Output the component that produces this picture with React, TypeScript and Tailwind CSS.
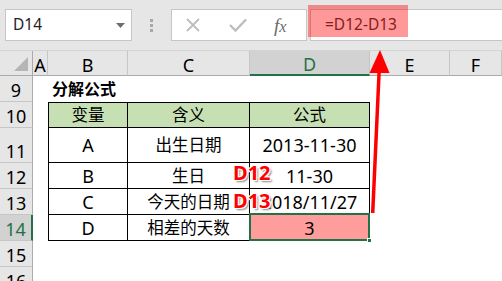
import React from "react";

const SANS = "font-['Noto_Sans','Noto_Sans_CJK_SC',sans-serif]";

const colHeads = [
  { name: "A", active: false },
  { name: "B", active: false },
  { name: "C", active: false },
  { name: "D", active: true },
  { name: "E", active: false },
  { name: "F", active: false },
];

const tableRows = [
  { n: 10, cells: ["变量", "含义", "公式"], head: true },
  { n: 11, cells: ["A", "出生日期", "2013-11-30"] },
  { n: 12, cells: ["B", "生日", "11-30"] },
  { n: 13, cells: ["C", "今天的日期", "2018/11/27"] },
  { n: 14, cells: ["D", "相差的天数", "3"] },
];

const isCjk = (s: string) => /[\u4e00-\u9fff]/.test(s);

const RowHead = ({ n, active }: { n: number; active?: boolean }) => (
  <div
    className={
      active
        ? "flex items-end justify-center pb-[2px] bg-[#d2d2d2] border-r-2 border-r-[#217346] border-b border-b-[#c6c6c6] text-[#217346] text-[18px] leading-[18px]"
        : "flex items-end justify-center pb-[2px] bg-[#e6e6e6] border-r border-r-[#ababab] border-b border-b-[#c6c6c6] text-black text-[18px] leading-[18px]"
    }
  >
    {n}
  </div>
);

const Toolbar = () => (
  <div className="h-[51px] bg-[#e6e6e6] border-b border-[#d4d4d4] flex items-start pt-[9px] pl-[5px]">
    {/* name box */}
    <div className="w-[127px] h-[32px] bg-white border border-[#c6c6c6] flex items-center justify-between pl-[7px] pr-[6px]">
      <span className="text-[15.5px] text-[#222]">D14</span>
      <svg width="9" height="5" viewBox="0 0 9 5">
        <polygon points="0,0 9,0 4.5,5" fill="#6e6e6e" />
      </svg>
    </div>
    {/* drag dots */}
    <div className="w-[39px] h-[32px] flex flex-col items-center justify-center gap-[2px]">
      <div className="w-[3px] h-[3px] bg-[#a8a8a8]" />
      <div className="w-[3px] h-[3px] bg-[#a8a8a8]" />
      <div className="w-[3px] h-[3px] bg-[#a8a8a8]" />
    </div>
    {/* cancel / enter / fx */}
    <div className="w-[136px] h-[32px] bg-white border border-[#c6c6c6] flex items-center pl-[14px]">
      <svg width="14" height="14" viewBox="0 0 14 14">
        <path d="M1 1 L13 13 M13 1 L1 13" stroke="#bdbdbd" strokeWidth="1.8" fill="none" />
      </svg>
      <svg width="18" height="14" viewBox="0 0 18 14" className="ml-[29px]">
        <path d="M1 7 L6.5 12.5 L17 1.5" stroke="#bdbdbd" strokeWidth="2.4" fill="none" />
      </svg>
      <span className="ml-[27px] font-['Liberation_Serif',serif] italic text-[19px] text-[#6a6a6a] leading-none">
        f<span className="text-[16px]">x</span>
      </span>
    </div>
    {/* formula bar */}
    <div className="flex-1 ml-[3px] h-[32px] bg-white border-y border-l border-[#c6c6c6] flex items-center pl-[14px]">
      <span className="text-[15.5px] text-[#333]">=D12-D13</span>
    </div>
  </div>
);

export default function App() {
  return (
    <div className={`relative w-[502px] h-[281px] overflow-hidden bg-white ${SANS}`}>
      <Toolbar />

      <div className="grid grid-cols-[33px_15px_80px_122px_120px_80px_1fr] grid-rows-[25px_26px_26px_35px_26px_26px_26px_26px_26px]">
        {/* column headers */}
        <div className="flex items-end justify-end pr-[4px] pb-[4px] bg-[#e6e6e6] border-r border-r-[#ababab] border-b border-b-[#ababab]">
          <svg width="14" height="14" viewBox="0 0 14 14">
            <polygon points="14,0 14,14 0,14" fill="#b5b5b5" />
          </svg>
        </div>
        {colHeads.map((c) => (
          <div
            key={c.name}
            className={
              c.active
                ? "flex items-center justify-center bg-[#d2d2d2] border-r border-r-[#c6c6c6] border-b-2 border-b-[#217346] text-[#217346] text-[18px] leading-[18px] pt-[3px]"
                : "flex items-center justify-center bg-[#e6e6e6] border-r border-r-[#c6c6c6] border-b border-b-[#ababab] text-black text-[18px] leading-[18px] pt-[3px]"
            }
          >
            {c.name}
          </div>
        ))}

        {/* row 9 */}
        <RowHead n={9} />
        <div />
        <div className="flex items-center pl-[4px] whitespace-nowrap font-bold text-[16px] leading-[18px] text-black">
          分解公式
        </div>
        <div />
        <div />
        <div />
        <div />

        {/* table rows */}
        {tableRows.map((r) => (
          <React.Fragment key={r.n}>
            <RowHead n={r.n} active={r.n === 14} />
            <div />
            {r.cells.map((t, i) => {
              const selected = r.n === 14 && i === 2;
              const border = [
                "border-r border-b border-black",
                i === 0 ? "border-l" : "",
                r.head ? "border-t" : "",
              ].join(" ");
              const bg = r.head ? "bg-[#c6e0b4]" : selected ? "bg-[#ff9c9c]" : "bg-white";
              const size = isCjk(t) ? "text-[16.5px]" : "text-[18px]";
              return (
                <div
                  key={i}
                  className={`relative flex items-center justify-center whitespace-nowrap leading-[18px] text-black ${border} ${bg} ${size}`}
                >
                  {t}
                  {selected && (
                    <div className="absolute -left-[1px] -top-[2px] -right-[1px] -bottom-[1px] border-2 border-[#217346]">
                      <div className="absolute -right-[4px] -bottom-[4px] w-[5px] h-[5px] bg-[#217346] border border-white" />
                    </div>
                  )}
                </div>
              );
            })}
            <div />
            <div />
          </React.Fragment>
        ))}

        {/* rows 15, 16 */}
        {[15, 16].map((n) => (
          <React.Fragment key={n}>
            <RowHead n={n} />
            <div />
            <div />
            <div />
            <div />
            <div />
            <div />
          </React.Fragment>
        ))}
      </div>

      {/* formula highlight */}
      <div className="absolute left-[308px] top-[5px] w-[100px] h-[32px] bg-[rgba(255,0,0,0.4)]" />

      {/* cell reference labels */}
      <div className="absolute left-[233px] top-[163px] text-[20px] leading-[20px] font-bold text-[#ff0000] [text-shadow:1px_1px_0_#fff,-1px_-1px_0_#fff,1px_-1px_0_#fff,-1px_1px_0_#fff,2px_2px_2px_#888]">
        D12
      </div>
      <div className="absolute left-[233px] top-[191px] text-[20px] leading-[20px] font-bold text-[#ff0000] [text-shadow:1px_1px_0_#fff,-1px_-1px_0_#fff,1px_-1px_0_#fff,-1px_1px_0_#fff,2px_2px_2px_#888]">
        D13
      </div>

      {/* arrow */}
      <svg className="absolute left-0 top-0 pointer-events-none" width="502" height="281" viewBox="0 0 502 281">
        <line x1="372.7" y1="213" x2="379.2" y2="70" stroke="#ff0000" strokeWidth="3.5" />
        <polygon points="380,50 369.5,73 389.5,73" fill="#ff0000" />
      </svg>
    </div>
  );
}
